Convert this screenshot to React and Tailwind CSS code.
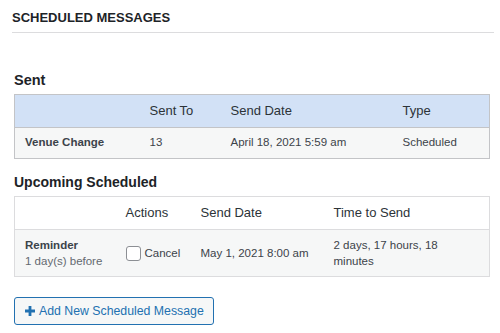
import React from 'react';

const sent = [
  { name: 'Venue Change', count: '13', date: 'April 18, 2021 5:59 am', type: 'Scheduled' },
];

const upcoming = [
  { name: 'Reminder', when: '1 day(s) before', date: 'May 1, 2021 8:00 am', eta: '2 days, 17 hours, 18 minutes' },
];

export default function App() {
  return (
    <div className="w-[500px] h-[333px] bg-white text-[#3c434a] font-['Liberation_Sans',Arial,sans-serif] overflow-hidden">
      <div className="pl-[12px] pr-[6px] pt-[9px]">
        <h2 className="m-0 text-[13px] leading-[18px] font-bold text-[#1d2327] pb-[5px] border-b border-[#dcdcde]">
          SCHEDULED MESSAGES
        </h2>
      </div>

      <div className="pl-[14px] pr-[11px]">
        <h3 className="mt-[38px] mb-[5px] text-[14.5px] leading-[18px] font-bold text-[#1d2327]">Sent</h3>
        <table className="w-[475px] table-fixed border-collapse border border-[#c3c4c7] text-left">
          <colgroup>
            <col className="w-[125px]" />
            <col className="w-[81px]" />
            <col className="w-[172px]" />
            <col className="w-[97px]" />
          </colgroup>
          <thead>
            <tr className="bg-[#d2e1f6] h-[33px] border-b border-[#c3c4c7]">
              <th className="px-[10px] font-normal text-[13px] text-[#2c3338]"></th>
              <th className="px-[10px] font-normal text-[13px] text-[#2c3338]">Sent To</th>
              <th className="px-[10px] font-normal text-[13px] text-[#2c3338]">Send Date</th>
              <th className="px-[10px] font-normal text-[13px] text-[#2c3338]">Type</th>
            </tr>
          </thead>
          <tbody>
            {sent.map((row) => (
              <tr key={row.name} className="bg-[#f6f7f7] h-[31px] text-[11.5px]">
                <td className="px-[10px] font-bold text-[#3c434a]">{row.name}</td>
                <td className="px-[10px]">{row.count}</td>
                <td className="px-[10px]">{row.date}</td>
                <td className="px-[10px]">{row.type}</td>
              </tr>
            ))}
          </tbody>
        </table>

        <h3 className="mt-[14px] mb-[5px] text-[14px] leading-[18px] font-bold text-[#1d2327]">Upcoming Scheduled</h3>
        <table className="w-[475px] table-fixed border-collapse border border-[#dcdcde] text-left">
          <colgroup>
            <col className="w-[101px]" />
            <col className="w-[75px]" />
            <col className="w-[133px]" />
            <col className="w-[166px]" />
          </colgroup>
          <thead>
            <tr className="bg-white h-[33px] border-b border-[#dcdcde]">
              <th className="px-[10px] font-normal text-[13px] text-[#2c3338]"></th>
              <th className="px-[10px] font-normal text-[13px] text-[#2c3338]">Actions</th>
              <th className="px-[10px] font-normal text-[13px] text-[#2c3338]">Send Date</th>
              <th className="px-[10px] font-normal text-[13px] text-[#2c3338]">Time to Send</th>
            </tr>
          </thead>
          <tbody>
            {upcoming.map((row) => (
              <tr key={row.name} className="bg-[#f6f7f7] h-[47px] text-[11.5px] leading-[16.5px]">
                <td className="px-[10px] whitespace-nowrap">
                  <div className="font-bold text-[#3c434a]">{row.name}</div>
                  <div className="text-[#646970]">{row.when}</div>
                </td>
                <td className="px-[10px]">
                  <label className="flex items-center gap-[4px] whitespace-nowrap">
                    <span className="shrink-0 inline-block w-[15px] h-[15px] rounded-[3px] border border-[#8c8f94] bg-white"></span>
                    Cancel
                  </label>
                </td>
                <td className="px-[10px] whitespace-nowrap">{row.date}</td>
                <td className="pl-[10px] pr-[40px]">{row.eta}</td>
              </tr>
            ))}
          </tbody>
        </table>

        <button className="mt-[20px] h-[28px] pl-[10px] pr-[9px] flex items-center gap-[4px] rounded-[3px] border border-[#2271b1] bg-[#f6f7f7] text-[#2271b1] text-[12.3px]">
          <svg width="10" height="10" viewBox="0 0 10 10">
            <path d="M3.6 0h2.8v3.6H10v2.8H6.4V10H3.6V6.4H0V3.6h3.6z" fill="#2271b1" />
          </svg>
          Add New Scheduled Message
        </button>
      </div>
    </div>
  );
}
